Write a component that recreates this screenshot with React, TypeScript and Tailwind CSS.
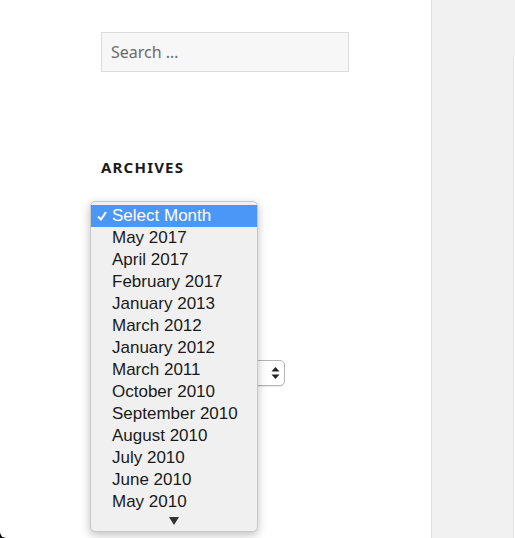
import React from 'react'

const months = [
  'May 2017',
  'April 2017',
  'February 2017',
  'January 2013',
  'March 2012',
  'January 2012',
  'March 2011',
  'October 2010',
  'September 2010',
  'August 2010',
  'July 2010',
  'June 2010',
  'May 2010',
]

const App = () => {
  return (
    <div className="relative flex h-[538px] w-[515px] overflow-hidden bg-white">
      {/* main column */}
      <main className="relative w-[431px] pl-[101px] pt-[32px] font-['Noto_Sans',sans-serif]">
        <div className="flex h-[40px] w-[248px] items-center border border-[#dcdcdc] bg-[#f7f7f7] pl-[9px] text-[16px] text-[#6b6b6b]">
          Search …
        </div>

        <h2 className="mt-[86px] text-[15px] font-bold leading-[18px] tracking-[0.08em] text-[#1a1a1a]">ARCHIVES</h2>

        <div className="mt-[184px] flex h-[26px] w-[184px] items-center justify-end rounded-[5px] border border-[#b5b5b5] bg-white pr-[4px] shadow-[0_1px_1px_rgba(0,0,0,0.08)]">
          <svg width="9" height="14" viewBox="0 0 9 14">
            <path d="M4.5 1 L8.5 5.5 L0.5 5.5 Z" fill="#222" />
            <path d="M4.5 13 L8.5 8.5 L0.5 8.5 Z" fill="#222" />
          </svg>
        </div>

        {/* open select menu */}
        <div className="absolute left-[90px] top-[201px] w-[168px] rounded-[5px] border border-[#c8c8c8] bg-[#f0f0f0] pt-[3px] shadow-[0_3px_10px_rgba(0,0,0,0.25)] font-['Liberation_Sans',Arial,sans-serif]">
          <div className="flex h-[22px] items-center bg-[#4a97f8] text-[17px] text-white">
            <span className="flex w-[21px] justify-center pl-[1px]">
              <svg width="10" height="10" viewBox="0 0 10 10">
                <path d="M1 5.5 L4 8.5 L9 1" fill="none" stroke="#fff" strokeWidth="2" />
              </svg>
            </span>
            <span>Select Month</span>
          </div>
          {months.map(m => (
            <div key={m} className="flex h-[22px] items-center pl-[21px] text-[17px] text-[#1a1a1a]">
              {m}
            </div>
          ))}
          <div className="flex h-[18px] items-start justify-center pt-[4px]">
            <svg width="10" height="8" viewBox="0 0 10 8">
              <path d="M0 0 L10 0 L5 8 Z" fill="#333" />
            </svg>
          </div>
        </div>
      </main>

      {/* right panel */}
      <aside className="relative flex-1 border-l border-[#dedede] bg-[#f1f1f1]">
        <div className="absolute right-0 top-[57px] bottom-0 w-[2px] border-l border-[#e2e2e2] bg-white" />
      </aside>

      {/* window corner */}
      <div className="absolute bottom-0 left-0 h-[6px] w-[6px] bg-black">
        <div className="h-full w-full rounded-bl-[6px] bg-white" />
      </div>
    </div>
  )
}

export default App
